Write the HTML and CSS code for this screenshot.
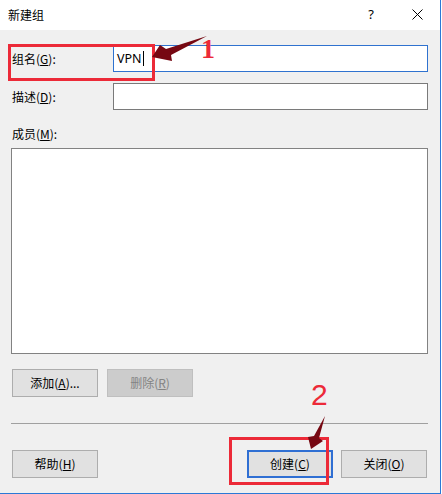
FILE: index.html
```html
<!DOCTYPE html>
<html lang="zh-CN">
<head>
<meta charset="utf-8">
<title>新建组</title>
<link rel="stylesheet" href="styles.css">
</head>
<body>
<div class="window">
  <div class="titlebar">
    <span class="title">新建组</span>
    <span class="cap-btn help">?</span>
    <span class="cap-btn close">
      <svg width="11" height="11" viewBox="0 0 11 11"><path d="M0.5 0.5 L10.5 10.5 M10.5 0.5 L0.5 10.5" stroke="#000" stroke-width="1" fill="none"/></svg>
    </span>
  </div>
  <div class="client">
    <div class="field-row">
      <label class="label">组名(<u>G</u>):</label>
      <div class="textbox focused"><span class="value">VPN</span><span class="caret"></span></div>
    </div>
    <div class="field-row second">
      <label class="label">描述(<u>D</u>):</label>
      <div class="textbox"></div>
    </div>
    <div class="members-label">成员(<u>M</u>):</div>
    <div class="members-box"></div>
    <div class="btn-row">
      <button class="btn">添加(<u>A</u>)...</button>
      <button class="btn disabled">删除(<u>R</u>)</button>
    </div>
    <div class="separator"></div>
    <div class="btn-row bottom">
      <button class="btn">帮助(<u>H</u>)</button>
      <span class="spacer"></span>
      <button class="btn default">创建(<u>C</u>)</button>
      <button class="btn">关闭(<u>O</u>)</button>
    </div>
  </div>
  <svg class="annotations" width="442" height="494" viewBox="0 0 442 494">
    <rect x="9.5" y="45.5" width="144" height="34" fill="none" stroke="#ec2a38" stroke-width="3"/>
    <rect x="230.5" y="438.5" width="97" height="45" fill="none" stroke="#ec2a38" stroke-width="3"/>
    <polygon points="152,57 160,45 166,49 207,36 171,55 172,61" fill="#760812"/>
    <polygon points="311,449 308,437 314,436 325,416 319,438 323,441" fill="#760812"/>
    <text x="201" y="58" class="num-one">1</text>
    <text x="311" y="405" class="num-two">2</text>
  </svg>
</div>
</body>
</html>
```

FILE: styles.css
```css
* { box-sizing: border-box; }
html, body { margin: 0; padding: 0; background: #ffffff; }
.window {
  position: relative;
  width: 441px;
  height: 494px;
  border-right: 1px solid #2b79d6;
  border-bottom: 1px solid #2b79d6;
  display: flex;
  flex-direction: column;
  font-family: "Noto Sans CJK SC", "Noto Sans", sans-serif;
  font-size: 12px;
  color: #000;
}
.titlebar {
  height: 30px;
  flex: none;
  display: flex;
  align-items: center;
  background: #ffffff;
  padding-left: 8px;
}
.title { flex: 1; font-size: 12px; line-height: 16px; }
.cap-btn {
  width: 46px;
  height: 30px;
  display: flex;
  align-items: center;
  justify-content: center;
}
.help { font-family: "Noto Sans", sans-serif; font-size: 13px; padding-bottom: 2px; }
.close { padding-bottom: 1px; }
.client {
  flex: 1;
  background: #f0f0f0;
  padding: 15px 0 0 11px;
  display: flex;
  flex-direction: column;
}
.field-row {
  display: grid;
  grid-template-columns: 102px 315px;
  align-items: center;
  height: 27px;
}
.field-row.second { margin-top: 11px; }
.label { padding-left: 1px; line-height: 16px; padding-top: 1px; }
.textbox {
  height: 27px;
  background: #ffffff;
  border: 1px solid #7a7a7a;
  display: flex;
  align-items: center;
  padding-left: 3px;
}
.textbox.focused { border-color: #2f72cf; }
.value { font-family: "Noto Sans", sans-serif; font-size: 12.5px; line-height: 16px; }
.caret { width: 1px; height: 15px; background: #000; margin-left: 1px; }
.members-label { margin-top: 16px; padding-left: 1px; line-height: 16px; height: 16px; }
.members-box {
  margin-top: 6px;
  width: 417px;
  height: 206px;
  background: #ffffff;
  border: 1px solid #828282;
}
.btn-row { display: flex; gap: 9px; margin-top: 15px; padding-left: 1px; }
.btn-row.bottom { margin-top: 26px; gap: 0; width: 416px; }
.btn {
  width: 86px;
  height: 28px;
  padding: 0;
  background: #e1e1e1;
  border: 1px solid #adadad;
  font-family: "Noto Sans CJK SC", "Noto Sans", sans-serif;
  font-size: 12px;
  line-height: 16px;
  color: #000;
}
.btn.disabled { background: #cccccc; border-color: #bfbfbf; color: #838383; }
.btn.default { border: 2px solid #2f6fd3; margin-right: 8px; }
.spacer { flex: 1; }
.separator {
  margin-top: 26px;
  width: 417px;
  height: 1px;
  background: #a0a0a0;
}
.annotations { position: absolute; left: 0; top: 0; pointer-events: none; }
.num-one { font-family: "Liberation Serif", serif; font-weight: bold; font-size: 28px; fill: #ec2a38; }
.num-two { font-family: "Liberation Sans", sans-serif; font-size: 30px; fill: #ec2a38; }
```
